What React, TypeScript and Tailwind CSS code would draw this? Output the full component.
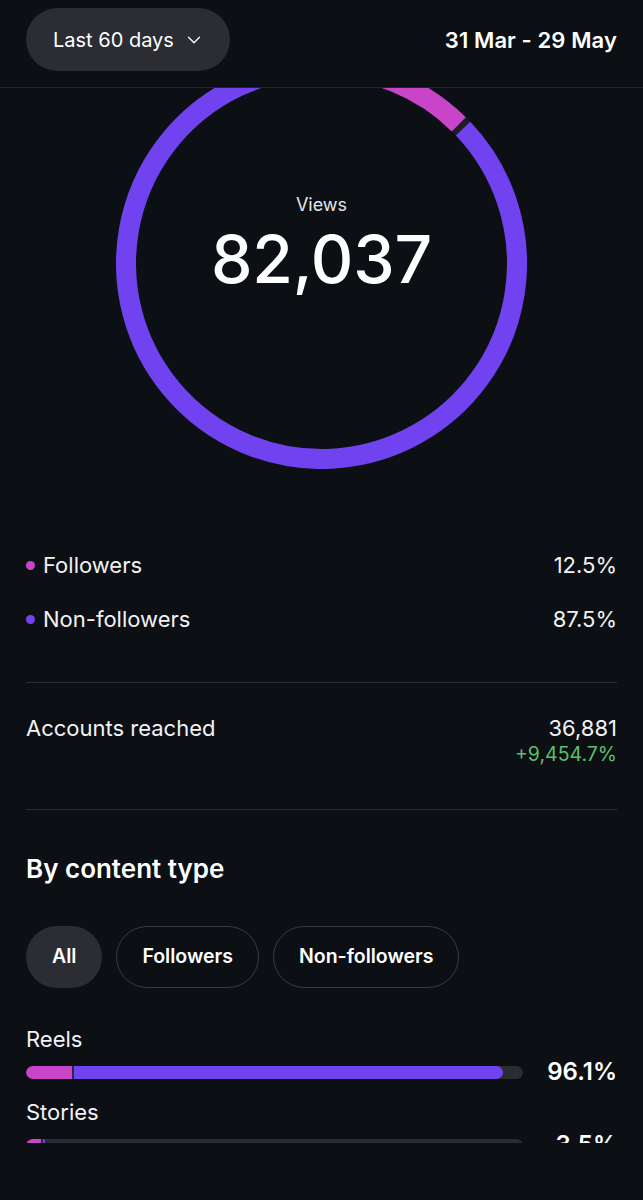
import React from 'react';
import { ChevronDown } from 'lucide-react';

const PINK = '#c845c9';
const PURPLE = '#7142ef';

// arc path on a circle, angles in degrees clockwise from 12 o'clock
const arc = (cx: number, cy: number, r: number, a0: number, a1: number) => {
  const pt = (a: number) => {
    const rad = ((a - 90) * Math.PI) / 180;
    return [cx + r * Math.cos(rad), cy + r * Math.sin(rad)];
  };
  const [x0, y0] = pt(a0);
  const [x1, y1] = pt(a1);
  const large = a1 - a0 > 180 ? 1 : 0;
  return `M ${x0} ${y0} A ${r} ${r} 0 ${large} 1 ${x1} ${y1}`;
};

const ViewsRing: React.FC = () => (
  <div className="relative mx-auto -mt-[30px] w-[411px] h-[411px] shrink-0">
    <svg width="411" height="411" viewBox="0 0 411 411">
      <circle cx="205.5" cy="205.5" r="195.5" fill="none" stroke="#1d1f26" strokeWidth="20" />
      <path d={arc(205.5, 205.5, 195.5, 0, 44.6)} fill="none" stroke={PINK} strokeWidth="20" />
      <path d={arc(205.5, 205.5, 195.5, 46.4, 359.5)} fill="none" stroke={PURPLE} strokeWidth="20" />
    </svg>
    <div className="absolute inset-0 flex flex-col items-center pt-[135px]">
      <span className="text-[18px] leading-[24px] text-[#e6e6e8]">Views</span>
      <span className="text-[66px] leading-[72px] font-medium text-white tracking-[-0.2px] mt-[6px]">82,037</span>
    </div>
  </div>
);

const LegendRow: React.FC<{ color: string; label: string; value: string }> = ({ color, label, value }) => (
  <div className="flex items-center justify-between h-[54px]">
    <div className="flex items-center gap-[8px]">
      <span className="w-[9px] h-[9px] rounded-full" style={{ backgroundColor: color }} />
      <span className="text-[22px] leading-[28px] text-[#f2f2f3]">{label}</span>
    </div>
    <span className="text-[22px] leading-[28px] text-[#f2f2f3]">{value}</span>
  </div>
);

const ContentBar: React.FC<{ label: string; pink: number; purple: number; value: string }> = ({
  label,
  pink,
  purple,
  value,
}) => (
  <div className="flex flex-col">
    <span className="text-[22px] leading-[28px] text-[#f2f2f3]">{label}</span>
    <div className="flex items-center justify-between mt-[5px] h-[28px]">
      <div className="w-[497px] h-[13px] rounded-full bg-[#2a2c31] flex gap-[2px] overflow-hidden">
        <div className="h-full rounded-l-full" style={{ width: pink, backgroundColor: PINK }} />
        <div className="h-full rounded-r-full" style={{ width: purple, backgroundColor: PURPLE }} />
      </div>
      <span className="text-[24px] leading-[28px] font-semibold text-white">{value}</span>
    </div>
  </div>
);

export default function App() {
  return (
    <div
      className="w-[643px] h-[1200px] bg-[#0c0f14] flex flex-col overflow-hidden"
      style={{ fontFamily: 'Inter, "Liberation Sans", sans-serif' }}
    >
      {/* Header */}
      <div className="h-[88px] shrink-0 px-[26px] flex items-start justify-between border-b border-[#24262b] relative z-10 bg-[#0c0f14]">
        <button className="mt-[8px] h-[63px] pl-[27px] pr-[25px] rounded-full bg-[#2b2d32] flex items-center gap-[9px] text-white">
          <span className="text-[20px] leading-[26px]">Last 60 days</span>
          <ChevronDown className="w-[22px] h-[22px]" strokeWidth={1.4} />
        </button>
        <span className="mt-[26px] text-[22px] leading-[28px] font-semibold text-white tracking-[0.1px]">31 Mar - 29 May</span>
      </div>

      {/* Scrolling body */}
      <div className="h-[1055px] shrink-0 overflow-hidden flex flex-col">
        <ViewsRing />

        <div className="px-[26px] flex flex-col">
          <div className="mt-[69px]">
            <LegendRow color={PINK} label="Followers" value="12.5%" />
            <LegendRow color={PURPLE} label="Non-followers" value="87.5%" />
          </div>

          <div className="mt-[36px] h-px bg-[#2a2c31]" />

          <div className="flex justify-between pt-[31px] pb-[43px]">
            <span className="text-[22px] leading-[28px] text-[#f2f2f3]">Accounts reached</span>
            <div className="flex flex-col items-end">
              <span className="text-[22px] leading-[28px] text-[#f2f2f3]">36,881</span>
              <span className="text-[19.5px] leading-[24px] text-[#5cbf6c]">+9,454.7%</span>
            </div>
          </div>

          <div className="h-px bg-[#2a2c31]" />

          <h2 className="mt-[43px] text-[26px] leading-[32px] font-semibold text-white">By content type</h2>

          <div className="mt-[41px] flex gap-[14px]">
            <span className="h-[62px] px-[26px] rounded-full bg-[#2b2d32] flex items-center text-[19.5px] font-semibold text-white">
              All
            </span>
            <span className="h-[62px] px-[25px] rounded-full border border-[#393b40] flex items-center text-[19.5px] font-semibold text-white">
              Followers
            </span>
            <span className="h-[62px] px-[25px] rounded-full border border-[#393b40] flex items-center text-[19.5px] font-semibold text-white">
              Non-followers
            </span>
          </div>

          <div className="mt-[37px] flex flex-col gap-[12px]">
            <ContentBar label="Reels" pink={46} purple={429} value="96.1%" />
            <ContentBar label="Stories" pink={15} purple={2} value="3.5%" />
          </div>
        </div>
      </div>
    </div>
  );
}
